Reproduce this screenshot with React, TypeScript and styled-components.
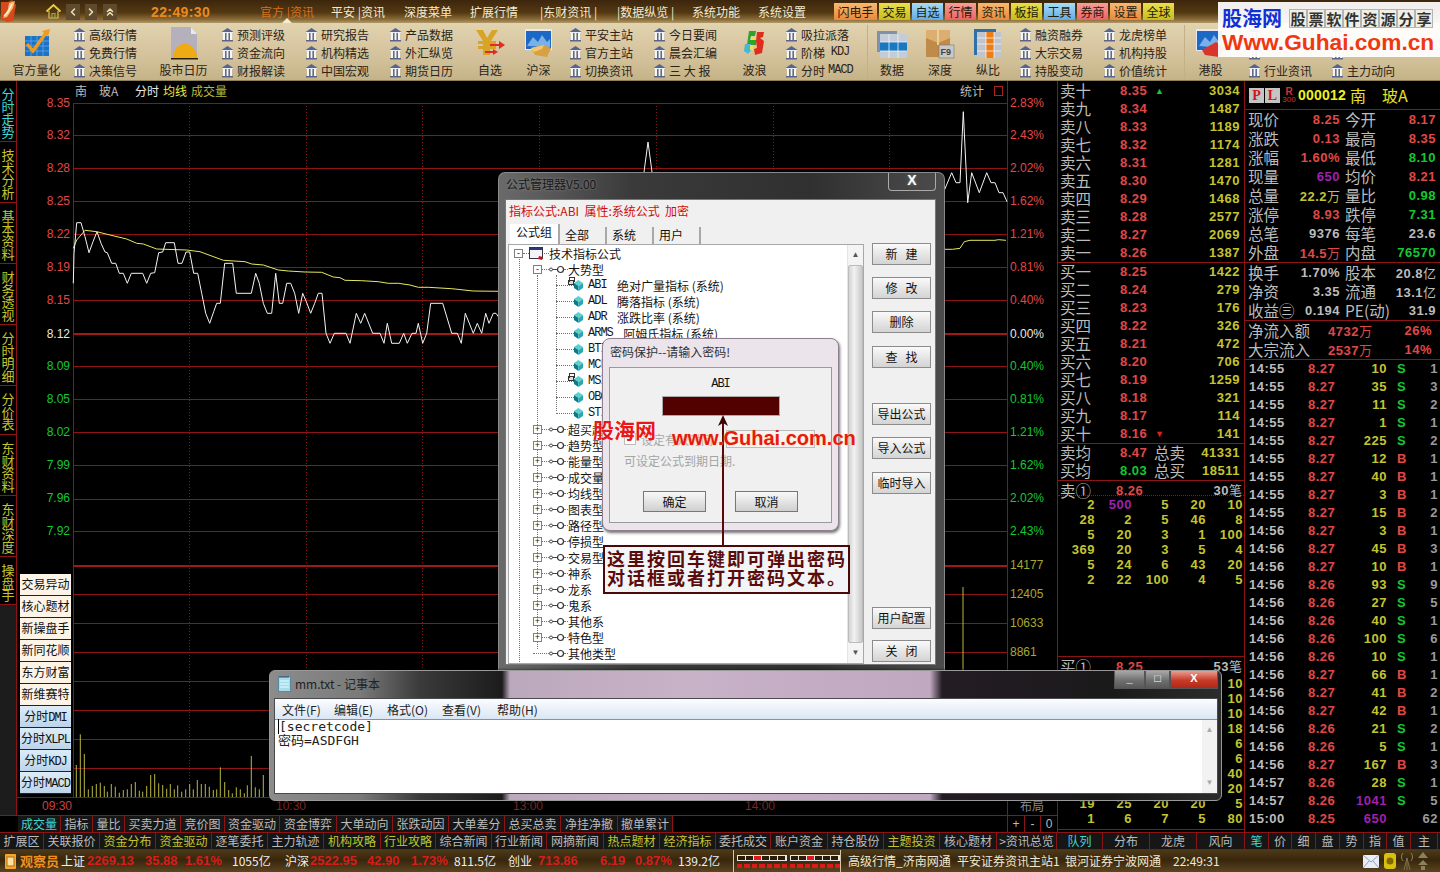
import React from 'react';
import styled, { createGlobalStyle } from 'styled-components';
import { ChevronLeft, ChevronRight, ChevronsUp } from 'lucide-react';

const CJK = '"Noto Sans CJK SC", "Liberation Sans", sans-serif';
const NUM = '"Liberation Sans", "Noto Sans CJK SC", sans-serif';
const C = {
  red: '#e04848',
  yellow: '#c4c430',
  green: '#14c832',
  gray: '#bcbcbc',
  purple: '#a020b0',
  line: '#8c1414',
  cyan: '#40d4d4',
  white: '#e8e8e8',
};

const Global = createGlobalStyle`
  html, body { margin: 0; padding: 0; background: #000; }
  body { font-family: ${CJK}; overflow: hidden; }
  * { box-sizing: border-box; }
`;

const Page = styled.div`
  position: relative;
  width: 1440px;
  height: 872px;
  overflow: hidden;
  background: #000;
  display: flex;
  flex-direction: column;
`;

/* ---------- top bar ---------- */
const TopBar = styled.div`
  height: 23px;
  flex: none;
  display: flex;
  align-items: center;
  background: linear-gradient(#3c260c, #543812 55%, #8a6c38 85%, #b09a68);
  position: relative;
`;
const LogoBox = styled.div`
  width: 46px;
  height: 23px;
  flex: none;
`;
const NavIcon = styled.div<{ $w: number; $dark?: boolean }>`
  width: ${p => p.$w}px;
  height: 16px;
  flex: none;
  display: flex;
  align-items: center;
  justify-content: center;
  color: #f0e0b0;
  background: ${p => (p.$dark ? '#5e4a2c' : 'transparent')};
`;
const NavGap = styled.div<{ $w: number }>`
  width: ${p => p.$w}px;
  flex: none;
`;
const Clock = styled.div`
  width: 109px;
  flex: none;
  font: bold 14px ${NUM};
  letter-spacing: 0.4px;
  color: #ea8a1c;
`;
const MenuItem = styled.div<{ $w: number; $active?: boolean }>`
  width: ${p => p.$w}px;
  flex: none;
  font-size: 12px;
  line-height: 16px;
  white-space: pre;
  color: ${p => (p.$active ? '#d8701c' : '#f2ead4')};
`;
const ActiveMark = styled.div`
  position: absolute;
  left: 282px;
  bottom: 0;
  width: 0;
  height: 0;
  border-left: 5px solid transparent;
  border-right: 5px solid transparent;
  border-bottom: 5px solid #f4ecd0;
`;
const HotGroup = styled.div`
  display: flex;
  gap: 2px;
`;
const tones: Record<string, string> = {
  o: 'linear-gradient(#f8b870, #e8893c)',
  y: 'linear-gradient(#e8e04c, #c6bc1c)',
  b: 'linear-gradient(#a6dcf4, #62ace4)',
  p: 'linear-gradient(#fa9c98, #e86464)',
};
const HotBtn = styled.div<{ $t: string; $w: number }>`
  width: ${p => p.$w}px;
  height: 17px;
  background: ${p => tones[p.$t]};
  color: #241a08;
  font-size: 12px;
  line-height: 17px;
  text-align: center;
`;

/* ---------- ribbon ---------- */
const Ribbon = styled.div`
  height: 58px;
  flex: none;
  display: flex;
  padding-top: 2px;
  background: linear-gradient(#e2d3b0, #d0be96 70%, #c4b288);
  border-bottom: 1px solid #8f8058;
`;
const BigCell = styled.div<{ $w: number; $sep?: boolean }>`
  width: ${p => p.$w}px;
  flex: none;
  display: flex;
  flex-direction: column;
  align-items: center;
  color: #2c2418;
  font-size: 12px;
  line-height: 18px;
  border-left: ${p => (p.$sep ? '1px solid #c2b088' : '0')};
`;
const BigIcon = styled.div`
  height: 36px;
  display: flex;
  align-items: center;
  justify-content: center;
`;
const SmallCol = styled.div<{ $w: number; $ml?: number }>`
  width: ${p => p.$w}px;
  margin-left: ${p => p.$ml ?? 0}px;
  flex: none;
  display: flex;
  flex-direction: column;
`;
const SmallRow = styled.div`
  height: 18px;
  display: flex;
  align-items: center;
  gap: 3px;
  font-size: 12px;
  color: #2c2418;
  white-space: pre;
`;
const MacroText = styled.span`
  font: 12px "Liberation Mono", monospace;
  letter-spacing: -1px;
`;

/* ---------- main ---------- */
const Main = styled.div`
  height: 751px;
  flex: none;
  display: grid;
  grid-template-columns: 1057px 188px 195px;
`;
const ChartCol = styled.div`
  display: flex;
  flex-direction: column;
  min-width: 0;
`;
const ChartArea = styled.div`
  position: relative;
  height: 734px;
  display: flex;
`;
const Rail = styled.div`
  width: 17px;
  flex: none;
  display: flex;
  flex-direction: column;
  background: #1c1c1c;
  border-right: 1px solid ${C.line};
`;
const RailTab = styled.div<{ $active?: boolean }>`
  writing-mode: vertical-rl;
  text-orientation: upright;
  font-size: 13px;
  letter-spacing: -0.5px;
  line-height: 15px;
  padding: 7px 0 3px;
  width: 16px;
  background: #000;
  color: ${p => (p.$active ? C.cyan : C.yellow)};
  border-bottom: 1px solid ${C.line};
  display: flex;
  align-items: center;
`;
const ChartSvg = styled.svg`
  display: block;
  width: 1040px;
  height: 734px;
  flex: none;
`;
const Ax = styled.text<{ $c: string }>`
  font: 12px ${NUM};
  fill: ${p => p.$c};
`;
const HeadText = styled.text<{ $c: string }>`
  font: 12px ${CJK};
  fill: ${p => p.$c};
`;
const FloatPanel = styled.div`
  position: absolute;
  left: 20px;
  top: 493px;
  width: 51px;
  display: flex;
  flex-direction: column;
`;
const FloatBtn = styled.div<{ $blue?: boolean }>`
  height: 22px;
  background: ${p => (p.$blue ? 'linear-gradient(#dcecf8, #bcd4ea)' : '#fdf3e6')};
  border-bottom: 1px solid #222;
  color: #101010;
  font-size: 12px;
  line-height: 19px;
  text-align: center;
  white-space: nowrap;
`;
const MonoLatin = styled.span`
  font: 12px "Liberation Mono", monospace;
  letter-spacing: -1px;
`;
const TabRow = styled.div`
  height: 17px;
  display: flex;
  padding-left: 18px;
  border-top: 1px solid ${C.line};
  background: #000;
`;
const TabCell = styled.div<{ $w: number; $c?: string }>`
  width: ${p => p.$w}px;
  flex: none;
  text-align: center;
  font-size: 12px;
  line-height: 16px;
  color: ${p => p.$c ?? C.gray};
  background: #161616;
  border-right: 1px solid ${C.line};
  white-space: nowrap;
`;
const TabSpacer = styled.div`
  flex: 1;
`;
const PlusCell = styled.div`
  width: 16.6px;
  flex: none;
  text-align: center;
  font: 12px/16px ${NUM};
  color: ${C.gray};
  border-left: 1px solid ${C.line};
`;

/* ---------- order book panel ---------- */
const BookPanel = styled.div`
  border-left: 1px solid ${C.line};
  border-right: 1px solid ${C.line};
  display: flex;
  flex-direction: column;
  padding-top: 1px;
  overflow: hidden;
`;
const BookBlock = styled.div`
  border-bottom: 1px solid ${C.line};
`;
const BookRow = styled.div`
  height: 18px;
  display: grid;
  grid-template-columns: 60px 33px 10px 1fr;
  align-items: center;
  padding: 0 4px 0 2px;
`;
const Cn16 = styled.span`
  font-size: 15.5px;
  line-height: 16px;
  padding-bottom: 2px;
  color: ${C.gray};
  white-space: nowrap;
`;
const Num = styled.span<{ $c?: string; $right?: boolean }>`
  font: bold 13px/18px ${NUM};
  letter-spacing: 0.5px;
  color: ${p => p.$c ?? C.yellow};
  text-align: ${p => (p.$right ? 'right' : 'left')};
  white-space: nowrap;
`;
const UpMark = styled.span<{ $c: string }>`
  font: bold 9px/9px ${NUM};
  color: ${p => p.$c};
  padding-left: 2px;
`;
const SumRow = styled.div`
  height: 18px;
  display: grid;
  grid-template-columns: 60px 34px 36px 1fr;
  align-items: center;
  padding: 0 4px 0 2px;
`;
const OneRow = styled.div<{ $dotted?: boolean }>`
  height: 15px;
  display: grid;
  grid-template-columns: 56px 40px 1fr;
  align-items: center;
  padding: 0 2px;
  border-bottom: ${p => (p.$dotted ? `1px dotted ${C.line}` : '0')};
`;
const TicksBlock = styled.div<{ $h: number; $pt?: number }>`
  height: ${p => p.$h}px;
  padding-top: ${p => p.$pt ?? 0}px;
  flex: none;
  border-bottom: 1px solid ${C.line};
  overflow: hidden;
`;
const TickRow = styled.div`
  display: grid;
  grid-template-columns: repeat(5, 37px);
  height: 15px;
  align-items: center;
`;

/* ---------- quote panel ---------- */
const QuotePanel = styled.div`
  display: flex;
  flex-direction: column;
  overflow: hidden;
`;
const QuoteHead = styled.div`
  height: 29px;
  flex: none;
  display: flex;
  align-items: center;
  padding-left: 4px;
  border-bottom: 1px solid ${C.line};
`;
const PLBox = styled.div`
  width: 15px;
  height: 15px;
  background: #c4c4c4;
  color: #d01818;
  font: bold 14px/15px "Liberation Serif", serif;
  text-align: center;
  margin-right: 1px;
`;
const RBadge = styled.div`
  width: 16px;
  display: flex;
  flex-direction: column;
  align-items: center;
  font: 8px/8px ${NUM};
  color: #d83030;
  margin-right: 1px;
`;
const RLetter = styled.span`
  font: bold 10px/9px ${NUM};
`;
const Code = styled.span`
  font: bold 14px ${NUM};
  color: #f0f020;
  letter-spacing: 0.2px;
  margin-right: 4px;
`;
const StockName = styled.span`
  font-size: 16px;
  color: #e8e020;
  white-space: pre;
`;
const QuoteBlock = styled.div`
  flex: none;
  border-bottom: 1px solid ${C.line};
`;
const QuoteRow = styled.div`
  height: 19px;
  display: grid;
  grid-template-columns: 35px 57px 5px 40px 51px;
  align-items: center;
  padding-left: 3px;
`;
const QuoteVal = styled.span<{ $c: string }>`
  font: bold 13px/17px ${NUM};
  letter-spacing: 0.5px;
  color: ${p => p.$c};
  text-align: right;
  white-space: nowrap;
`;
const UnitCn = styled.span`
  font-weight: normal;
  font-family: ${CJK};
  font-size: 13px;
  letter-spacing: 0;
`;
const FlowRow = styled.div`
  height: 19px;
  display: grid;
  grid-template-columns: 64px 60px 60px;
  align-items: center;
  padding-left: 3px;
`;
const Deal = styled.div`
  height: 18px;
  display: grid;
  grid-template-columns: 59px 38px 41px 20px 1fr;
  align-items: center;
  padding-left: 4px;
  padding-right: 2px;
`;
const DealList = styled.div``;
const BS = styled.span<{ $c: string }>`
  font: bold 13px/18px ${NUM};
  color: ${p => p.$c};
  text-align: left;
  padding-left: 10px;
`;

/* ---------- bottom rows ---------- */
const Row2 = styled.div`
  height: 18px;
  flex: none;
  display: flex;
  background: #161616;
  border-top: 1px solid ${C.line};
  border-bottom: 1px solid ${C.line};
`;
const Status = styled.div`
  height: 22px;
  flex: none;
  display: flex;
  align-items: center;
  background: linear-gradient(#4e3a18, #38260c 45%, #5a4520);
  overflow: hidden;
`;
const StatItem = styled.div<{ $w: number; $c: string; $bold?: boolean; $s?: number }>`
  width: ${p => p.$w}px;
  flex: none;
  color: ${p => p.$c};
  font: ${p => (p.$bold ? 'bold' : 'normal')} ${p => p.$s ?? 13}px/18px ${CJK};
  white-space: pre;
`;
const StatNum = styled(StatItem)`
  font-family: ${NUM};
`;
const StatusIcon = styled.div`
  width: 20px;
  display: flex;
  justify-content: center;
  flex: none;
`;
const SegBoxOuter = styled.div`
  display: flex;
  gap: 3px;
  padding-left: 3px;
  margin-right: 7px;
  border-left: 1px solid #d0c8a8;
  border-right: 1px solid #d0c8a8;
  height: 22px;
  align-items: center;
  flex: none;
`;
const SegGroup = styled.div`
  width: 50px;
  display: flex;
  flex-direction: column;
  gap: 3px;
`;
const SegTop = styled.div`
  display: flex;
  height: 6px;
  border: 1px solid #e8e8e8;
`;
const SegCell = styled.div<{ $on?: string }>`
  flex: 1;
  background: ${p => p.$on ?? '#2a1c08'};
  border-right: 1px solid #e8e8e8;
`;
const SegDots = styled.div`
  display: flex;
  gap: 2px;
`;
const SegDot = styled.div`
  flex: 1;
  height: 4px;
  background: #e01818;
`;
const StatusRight = styled.div`
  margin-left: auto;
  display: flex;
  align-items: center;
  gap: 5px;
  padding-right: 12px;
`;

/* ---------- Guhai overlays ---------- */
const Stamp = styled.div`
  position: absolute;
  top: 2px;
  left: 1218px;
  width: 222px;
  height: 55px;
  background: rgba(255, 255, 255, 0.93);
  padding: 3px 0 0 4px;
`;
const StampTop = styled.div`
  display: flex;
  align-items: center;
  height: 26px;
`;
const StampBlue = styled.div`
  width: 67px;
  font: bold 20px/24px ${CJK};
  color: #1030d8;
`;
const StampCell = styled.div`
  width: 18px;
  height: 19px;
  font: bold 15px/18px ${CJK};
  text-align: center;
  color: #333;
  background: #efefe6;
  border: 1px solid #b4b4b4;
`;
const StampRed = styled.div`
  font: bold 22.7px/23px ${NUM};
  color: #f03810;
  white-space: nowrap;
`;
const MarkCn = styled.div`
  position: absolute;
  left: 593px;
  top: 414px;
  font: bold 21px/30px ${CJK};
  color: #e81818;
  text-shadow: 0 0 2px #fff;
  white-space: nowrap;
`;
const MarkEn = styled.div`
  position: absolute;
  left: 672px;
  top: 426px;
  font: bold 20px/24px ${NUM};
  color: #e81818;
  text-shadow: 0 0 2px #ffe890;
  white-space: nowrap;
`;

/* ---------- formula manager window ---------- */
const Manager = styled.div`
  position: absolute;
  left: 498px;
  top: 172px;
  width: 447px;
  height: 498px;
  border-radius: 7px 7px 0 0;
  border: 1px solid #8a8a8a;
  border-bottom: 0;
  background: linear-gradient(90deg, #6a6a6a, #3a3a3a 30%, #303030 70%, #4c4c4c);
  display: flex;
  flex-direction: column;
`;
const MgrTitle = styled.div`
  height: 26px;
  flex: none;
  display: flex;
  align-items: flex-start;
  padding-left: 7px;
  font-size: 12px;
  line-height: 22px;
  color: #181818;
  text-shadow: 0 0 3px #8a8a8a;
`;
const MgrClose = styled.div`
  margin-left: auto;
  margin-right: 8px;
  width: 48px;
  height: 18px;
  border: 1px solid #aaa;
  border-top: 0;
  border-radius: 0 0 4px 4px;
  color: #fff;
  font: bold 14px/15px ${NUM};
  text-align: center;
`;
const MgrPanel = styled.div`
  margin: 0 8px 5px 6px;
  flex: 1;
  background: #f0f0f0;
  border: 1px solid #777;
  display: flex;
  flex-direction: column;
  padding-left: 2px;
  min-height: 0;
`;
const RedLine = styled.div`
  height: 22px;
  flex: none;
  color: #d00c0c;
  font-size: 12px;
  line-height: 22px;
  padding-left: 1px;
  white-space: pre;
`;
const TabsLine = styled.div`
  height: 22px;
  flex: none;
  display: flex;
  align-items: flex-end;
  padding-left: 2px;
`;
const MgrTab = styled.div<{ $on?: boolean }>`
  width: ${p => (p.$on ? 50 : 47)}px;
  height: ${p => (p.$on ? 20 : 17)}px;
  font-size: 12px;
  line-height: 15px;
  padding-left: ${p => (p.$on ? 6 : 5)}px;
  color: #111;
  border-right: 2px solid #a8a8a8;
  background: ${p => (p.$on ? '#fff' : '#f0f0f0')};
`;
const MgrBody = styled.div`
  flex: 1;
  display: flex;
  min-height: 0;
`;
const Tree = styled.div`
  position: relative;
  width: 356px;
  flex: none;
  background: #fff;
  border: 1px solid #a8a8a8;
  overflow: hidden;
`;
const TreeRow = styled.div<{ $lv: number }>`
  height: 16px;
  display: flex;
  align-items: center;
  padding-left: ${p => [5, 24, 47][p.$lv]}px;
  font-size: 12px;
  color: #151515;
  white-space: pre;
  position: relative;
`;
const Expander = styled.div`
  width: 9px;
  height: 9px;
  flex: none;
  border: 1px solid #808080;
  background: #fff;
  color: #222;
  font: 9px/7px ${NUM};
  text-align: center;
  position: relative;
`;
const Dash = styled.div<{ $w: number }>`
  width: ${p => p.$w}px;
  flex: none;
  border-top: 1px dotted #707070;
`;
const Code2 = styled.span`
  min-width: 24px;
  flex: none;
  font: 12px "Liberation Mono", monospace;
  margin-left: 5px;
  margin-right: 5px;
  letter-spacing: -1px;
`;
const Guide = styled.div<{ $x: number; $t: number; $h: number }>`
  position: absolute;
  left: ${p => p.$x}px;
  top: ${p => p.$t}px;
  height: ${p => p.$h}px;
  border-left: 1px dotted #707070;
`;
const Scroll = styled.div`
  position: absolute;
  right: 0;
  top: 0;
  bottom: 0;
  width: 16px;
  background: #f4f4f4;
  border-left: 1px solid #e4e4e4;
  display: flex;
  flex-direction: column;
  align-items: center;
`;
const ScrollArrow = styled.div`
  height: 20px;
  color: #555;
  font: 8px/20px ${NUM};
  flex: none;
`;
const ScrollThumb = styled.div`
  flex: 1;
  width: 15px;
  background: linear-gradient(90deg, #d4d4d4, #f2f2f2 40%, #c8c8c8);
  border: 1px solid #bbb;
  border-radius: 2px;
`;
const SideBtns = styled.div`
  flex: 1;
  display: flex;
  flex-direction: column;
  padding: 0 0 2px 8px;
`;
const WinBtn = styled.div<{ $mt?: number; $auto?: boolean }>`
  width: 59px;
  height: 22px;
  margin-top: ${p => (p.$auto ? 'auto' : `${p.$mt ?? 12}px`)};
  border: 1px solid #8c8c8c;
  background: linear-gradient(#fafafa, #e6e6e6 50%, #d4d4d4);
  font-size: 12px;
  line-height: 20px;
  text-align: center;
  color: #111;
  white-space: pre;
  flex: none;
`;

/* ---------- password dialog ---------- */
const PwdWin = styled.div`
  position: absolute;
  left: 602px;
  top: 338px;
  width: 237px;
  height: 193px;
  border-radius: 8px;
  border: 1px solid #8e8090;
  background: #ebe4eb;
  box-shadow: 1px 2px 3px rgba(0, 0, 0, 0.55);
  display: flex;
  flex-direction: column;
  padding: 0 6px 7px 6px;
`;
const PwdTitle = styled.div`
  height: 28px;
  flex: none;
  font-size: 12px;
  line-height: 26px;
  padding-left: 1px;
  color: #333;
`;
const PwdClient = styled.div`
  flex: 1;
  background: #f0f0f0;
  border: 1px solid #9a9a9a;
  display: flex;
  flex-direction: column;
  align-items: stretch;
`;
const PwdCode = styled.div`
  font: 12px/16px "Liberation Mono", monospace;
  letter-spacing: -1px;
  margin-top: 8px;
  text-align: center;
  color: #111;
`;
const PwdInput = styled.div`
  width: 118px;
  height: 20px;
  margin: 4px 0 0 52px;
  background: #520000;
  border: 1px solid #aaa;
`;
const CheckLine = styled.div`
  margin-top: 14px;
  height: 18px;
  padding: 0 16px 0 14px;
  display: flex;
  align-items: center;
  gap: 5px;
  font-size: 12px;
  color: #aaa;
`;
const CheckBox = styled.div`
  width: 12px;
  height: 12px;
  background: #fff;
  border: 1px solid #bbb;
  flex: none;
`;
const DateBox = styled.div`
  margin-left: auto;
  width: 89px;
  height: 18px;
  border: 1px solid #bbb;
  background: #f4f4f4;
`;
const HintLine = styled.div`
  margin-top: 5px;
  padding-left: 14px;
  font-size: 12px;
  line-height: 16px;
  color: #a4a4a4;
`;
const PwdBtns = styled.div`
  margin-top: auto;
  display: flex;
  gap: 29px;
  padding: 0 0 10px 33px;
`;
const PwdBtn = styled.div`
  width: 63px;
  height: 21px;
  border: 1px solid #777;
  background: linear-gradient(#f8f8f8, #e4e4e4 50%, #cfcfcf);
  font-size: 12px;
  line-height: 19px;
  text-align: center;
  color: #111;
`;
const ArrowSvg = styled.svg`
  position: absolute;
  left: 714px;
  top: 414px;
  width: 18px;
  height: 132px;
`;
const NoteBox = styled.div`
  position: absolute;
  left: 603px;
  top: 545px;
  width: 247px;
  height: 49px;
  background: #f2f4f6;
  border: 2px solid #4a0808;
  color: #5a0c0c;
  font: bold 18px/19px ${CJK};
  letter-spacing: 2px;
  padding: 2px 0 0 2px;
  white-space: nowrap;
`;

/* ---------- notepad ---------- */
const NotePad = styled.div`
  position: absolute;
  left: 269px;
  top: 670px;
  width: 953px;
  height: 131px;
  border: 1px solid #999;
  border-radius: 6px;
  background: linear-gradient(
    90deg,
    #8c8c8c 0,
    #7a7a7a 90px,
    #3a3a3a 150px,
    #1c1c1c 232px,
    #bca8bc 240px,
    #c8b2c8 420px,
    #c0a8c0 660px,
    #241c24 672px,
    #1a1a1a 840px,
    #2c2c2c 100%
  );
  display: flex;
  flex-direction: column;
  box-shadow: 0 0 3px rgba(0, 0, 0, 0.7);
`;
const NoteTitle = styled.div`
  height: 27px;
  flex: none;
  display: flex;
  align-items: flex-start;
  padding: 4px 3px 0 8px;
  gap: 4px;
  font-size: 12px;
  line-height: 17px;
  color: #222;
`;
const CaptionBtns = styled.div`
  margin-left: auto;
  margin-top: -4px;
  display: flex;
  height: 18px;
`;
const Caption = styled.div<{ $w: number; $red?: boolean }>`
  width: ${p => p.$w}px;
  height: 18px;
  border: 1px solid #555;
  border-top: 0;
  background: ${p =>
    p.$red ? 'linear-gradient(#e8a090, #c83a28 55%, #b02818)' : 'linear-gradient(#a8a8a8, #707070 55%, #585858)'};
  color: #fff;
  font: bold 11px/15px ${NUM};
  text-align: center;
`;
const NoteClient = styled.div`
  flex: 1;
  margin: 0 3px 6px 4px;
  border: 1px solid #4a4a4a;
  display: flex;
  flex-direction: column;
  min-height: 0;
  background: #fff;
`;
const NoteMenu = styled.div`
  height: 21px;
  flex: none;
  display: flex;
  align-items: center;
  padding-left: 7px;
  background: linear-gradient(#fbfcfe, #dbe6f4);
  border-bottom: 1px solid #7a96b4;
  font-size: 12px;
  color: #222;
`;
const NoteMenuItem = styled.div<{ $w: number }>`
  width: ${p => p.$w}px;
  flex: none;
`;
const NoteText = styled.div`
  flex: 1;
  display: flex;
  min-height: 0;
`;
const NotePre = styled.pre`
  flex: 1;
  margin: 0;
  padding: 0 0 0 3px;
  font: 13px/13.5px "DejaVu Sans Mono", "Noto Sans CJK SC", monospace;
  color: #222;
`;
const Caret = styled.span`
  border-left: 1px solid #000;
`;
const NoteScroll = styled.div`
  width: 15px;
  flex: none;
  background: #f2f2f2;
  color: #aaa;
  font: 8px/20px ${NUM};
  text-align: center;
  display: flex;
  flex-direction: column;
  justify-content: space-between;
`;

/* ---------- small drawings ---------- */
const Bank = () => (
  <svg width="13" height="15" viewBox="0 0 13 15">
    <path d="M6.500 1 12.500 5H.5z" fill="#59648a" />
    <path d="M1 5h11v1H1z" fill="#e8ecf4" />
    <path d="M2 6h2v7H2zM5.500 6h2v7h-2zM9 6h2v7H9z" fill="#f4f6fa" />
    <path d="M4 6h1.500v7H4zM7.500 6H9v7H7.500z" fill="#5f6a8e" />
    <path d="M1 13h11v1.500H1z" fill="#59648a" />
  </svg>
);
const Logo = () => (
  <svg width="20" height="22" viewBox="0 0 20 22">
    <path d="M1 2h7l4-2 4 5-3 16-6 1-6-3z" fill="#d8481c" />
    <path d="M9 3 15 1 13 8 7 17 3 18 8 9z" fill="#f6c070" />
    <path d="M12 4 8 12 4 16" stroke="#fff" strokeWidth="1.200" fill="none" />
  </svg>
);
const House = () => (
  <svg width="15" height="15" viewBox="0 0 15 15">
    <path d="M.5 7.500 7.500 1l7 6.500" stroke="#e8d048" strokeWidth="1.800" fill="none" />
    <path d="M3 7v7h9V7" stroke="#d8c050" strokeWidth="1.200" fill="none" />
    <path d="M6 14V9.500h3V14" stroke="#8ab040" strokeWidth="1.200" fill="none" />
  </svg>
);
const IconQuant = () => (
  <svg width="30" height="30" viewBox="0 0 30 30">
    <rect x="3" y="8" width="24" height="20" fill="#1c72c4" />
    <path d="M3 13h24M3 18h24M3 23h24M9 8v20M15 8v20M21 8v20" stroke="#62a8e8" strokeWidth=".8" />
    <path d="M5 16 11 23 24 5" stroke="#f09a20" strokeWidth="3.400" fill="none" />
    <path d="M20 3 28 1 26 9z" fill="#f09a20" />
  </svg>
);
const IconCalendar = () => (
  <svg width="32" height="34" viewBox="0 0 32 34">
    <path d="M3 1h20l6 7v25H3z" fill="#b4b0bc" />
    <path d="M23 1l6 7h-6z" fill="#e8e8ee" />
    <path d="M5 32a11 13 0 0 1 24 0z" fill="#f0aa14" />
    <path d="M3 32h27v1.500H3z" fill="#2a2000" />
  </svg>
);
const IconYen = () => (
  <svg width="30" height="28" viewBox="0 0 30 28">
    <path d="M1 1h7l4 8 5-8h6l-7 11h5v3h-6v2h6v3h-6v6h-7v-6H3v-3h5v-2H3v-3h5z" fill="#d8a428" />
    <path d="M15 15h9v-3l6 4-6 4v-3h-9z" fill="#e02c1c" />
    <path d="M10 22h8v-2l5 3-5 3v-2h-8z" fill="#e02c1c" />
  </svg>
);
const IconShSz = () => (
  <svg width="30" height="30" viewBox="0 0 30 30">
    <rect x="1" y="1" width="27" height="21" fill="#e8e8f0" />
    <rect x="2" y="3" width="25" height="18" fill="#1c68c4" />
    <path d="M3 18 9 9l5 5 4-7 5 7 3-3v8z" fill="#7ab0e8" />
    <path d="M7 20 20 17 27 20 23 29 11 27z" fill="#d8a040" />
    <path d="M7 20 20 17 18 21 10 24z" fill="#f0c870" />
  </svg>
);
const IconWave = () => (
  <svg width="26" height="26" viewBox="0 0 26 26">
    <path d="M7 1h7l-1 5H9l-1 4 6 0v5H5z" fill="#30a030" />
    <path d="M15 2h7l-1 5-3 1 4 3-2 12-7 2-1-6 3-1-1-7z" fill="#e02c1c" />
    <path d="M3 14h6l1 5-4 5-4-3z" fill="#48b8d0" />
    <path d="M9 7h4v3H9zM8 15h3v5H8z" fill="#f0e040" />
  </svg>
);
const IconData = () => (
  <svg width="32" height="30" viewBox="0 0 32 30">
    <path d="M1 3h20v3H4v18H1z" fill="#8090a8" />
    <rect x="4" y="6" width="27" height="24" fill="#c4ccd8" />
    <rect x="4" y="14" width="27" height="9" fill="#1878c0" />
    <path d="M4 14h27M4 23h27M13 6v24M22 6v24" stroke="#f0f4fa" strokeWidth=".8" />
  </svg>
);
const IconDepth = () => (
  <svg width="30" height="32" viewBox="0 0 30 32">
    <path d="M1 3h24v27H1z" fill="#c08a48" />
    <path d="M1 3h24v8L13 16 1 11z" fill="#dcae70" />
    <path d="M13 0v18" stroke="#e8d098" strokeWidth="2" />
    <rect x="14" y="18" width="15" height="13" fill="#c8c8c8" stroke="#777" strokeWidth=".6" />
    <text x="15.500" y="28" fontSize="9" fontWeight="700" fill="#444" fontFamily="Liberation Sans">F9</text>
  </svg>
);
const IconRatio = () => (
  <svg width="30" height="32" viewBox="0 0 30 32">
    <path d="M1 2h22v3H4v23H1z" fill="#3070a8" />
    <rect x="4" y="5" width="24" height="26" fill="#c0c4cc" />
    <rect x="13" y="5" width="8" height="26" fill="#f07c14" />
    <path d="M4 11h24M4 17h24M4 24h24M13 5v26M21 5v26" stroke="#f2f2f2" strokeWidth=".8" />
  </svg>
);
const IconHk = () => (
  <svg width="30" height="28" viewBox="0 0 30 28">
    <rect x="0" y="0" width="27" height="22" fill="#e8e8f0" />
    <rect x="1" y="2" width="25" height="19" fill="#1c68c4" />
    <path d="M3 17 9 8l5 5 4-7 5 7 3-3v9z" fill="#7ab0e8" />
    <path d="M6 21 20 13 29 19 23 28 9 26z" fill="#d8342c" />
  </svg>
);
const KeyIcon = () => (
  <svg width="15" height="9" viewBox="0 0 15 9">
    <circle cx="2" cy="4.500" r="1.500" fill="none" stroke="#444" />
    <path d="M3.500 4.500H9" stroke="#444" />
    <circle cx="11.500" cy="4.500" r="3" fill="#fff" stroke="#333" strokeWidth="1.200" />
  </svg>
);
const Cube = () => (
  <svg width="9" height="11" viewBox="0 0 9 11">
    <path d="M4.500 0 9 3 4.500 6 0 3z" fill="#5cd0d0" />
    <path d="M0 3l4.500 3v5L0 8z" fill="#0a7a88" />
    <path d="M9 3 4.500 6v5L9 8z" fill="#28a8b0" />
  </svg>
);
const RootIcon = () => (
  <svg width="15" height="13" viewBox="0 0 15 13">
    <rect x=".5" y=".5" width="13" height="11" fill="#f4f4f8" stroke="#334" />
    <path d="M1 1h12v2H1z" fill="#28387c" />
    <path d="M10 9l4 1-1 3-4-1z" fill="#c01818" />
  </svg>
);
const LockIcon = styled.div`
  position: absolute;
  left: 59px;
  top: 3px;
  width: 6px;
  height: 5px;
  border: 1px solid #333;
  background: #ddd;
  &::before {
    content: '';
    position: absolute;
    left: 0;
    top: -4px;
    width: 4px;
    height: 4px;
    border: 1px solid #333;
    border-bottom: 0;
  }
`;
const Envelope = () => (
  <svg width="16" height="13" viewBox="0 0 16 13">
    <rect width="16" height="13" fill="#e8eef8" />
    <path d="M0 0 8 7l8-7M0 13l6-7M16 13l-6-7" stroke="#90a0b8" fill="none" />
  </svg>
);
const Coin = () => (
  <svg width="12" height="16" viewBox="0 0 12 16">
    <rect width="12" height="16" rx="3" fill="#d8c010" />
    <circle cx="6" cy="8" r="3.500" fill="#806800" />
  </svg>
);
const WatchIcon = () => (
  <svg width="11" height="15" viewBox="0 0 11 15">
    <rect width="11" height="15" rx="1" fill="#f0a830" />
    <rect x="2" y="3" width="7" height="9" fill="#fbe0a0" stroke="#b86a10" />
  </svg>
);
const Antenna = () => (
  <svg width="12" height="20" viewBox="0 0 12 20">
    <path d="M6 7v12M3 19l3-12 3 12" stroke="#7c7450" fill="none" />
    <path d="M2 2a6 6 0 0 0 0 8M10 2a6 6 0 0 1 0 8" stroke="#8a8258" fill="none" />
  </svg>
);
const UpDown = () => (
  <svg width="10" height="18" viewBox="0 0 10 18">
    <path d="M5 0 10 6H0zM5 8l5 5H0zM3 14h4v4H3z" fill="#8a8258" />
  </svg>
);
const NoteIcon = () => (
  <svg width="13" height="17" viewBox="0 0 13 17">
    <rect x=".5" y="1.500" width="12" height="15" fill="#a8dcec" stroke="#5a8aa0" />
    <path d="M2 1v2M4 1v2M6 1v2M8 1v2M10 1v2" stroke="#446" />
    <path d="M2 6h9M2 9h9M2 12h9" stroke="#dff" />
  </svg>
);

/* ---------- data ---------- */
const big = (w: number, label: string, icon: React.ReactNode, sep?: boolean) => ({ kind: 'big' as const, w, label, icon, sep });
const col = (w: number, rows: React.ReactNode[], ml?: number) => ({ kind: 'col' as const, w, rows, ml });
const ribbon = [
  big(73, '官方量化', <IconQuant />),
  col(73, ['高级行情', '免费行情', '决策信号']),
  big(75, '股市日历', <IconCalendar />),
  col(84, ['预测评级', '资金流向', '财报解读']),
  col(84, ['研究报告', '机构精选', '中国宏观']),
  col(79, ['产品数据', '外汇纵览', '期货日历']),
  big(44, '自选', <IconYen />),
  big(53, '沪深', <IconShSz />),
  col(84, ['平安主站', '官方主站', '切换资讯'], 4),
  col(76, ['今日要闻', '晨会汇编', '三 大 报']),
  big(51, '波浪', <IconWave />),
  col(82, ['吸拉派落', <>阶梯 <MacroText>KDJ</MacroText></>, <>分时<MacroText>MACD</MacroText></>], 5),
  big(49, '数据', <IconData />, true),
  big(48, '深度', <IconDepth />),
  big(48, '纵比', <IconRatio />),
  col(84, ['融资融券', '大宗交易', '持股变动'], 7),
  col(81, ['龙虎榜单', '机构持股', '价值统计']),
  big(52, '港股', <IconHk />, true),
  col(83, ['\u00a0', '\u00a0', '行业资讯'], 12),
  col(100, ['\u00a0', '\u00a0', '主力动向']),
];
const menus: [string, number, boolean?][] = [
  ['官方 |资讯', 71, true],
  ['平安 |资讯', 73],
  ['深度菜单', 66],
  ['扩展行情', 70],
  ['|东财资讯 |', 77],
  ['|数据纵览 |', 75],
  ['系统功能', 66],
  ['系统设置', 76],
];
const hot: [string, string, number][] = [
  ['闪电手', 'o', 43],
  ['交易', 'y', 31],
  ['自选', 'b', 31],
  ['行情', 'p', 31],
  ['资讯', 'o', 31],
  ['板指', 'y', 31],
  ['工具', 'b', 31],
  ['券商', 'p', 31],
  ['设置', 'o', 31],
  ['全球', 'y', 31],
];
const railTabs = ['分时走势', '技术分析', '基本资料', '财务透视', '分时明细', '分价表', '东财资料', '东财深度', '操盘手'];

const hLines = [103, 135, 168, 201, 234, 267, 300, 366, 399, 432, 465, 499, 531, 594, 623, 652, 681, 710, 739, 768];
const vLines = [189, 306, 422, 539, 656, 773, 889];
const leftAxis: [string, number, string][] = [
  ['8.35', 103, C.red], ['8.32', 135, C.red], ['8.28', 168, C.red], ['8.25', 201, C.red],
  ['8.22', 234, C.red], ['8.19', 267, C.red], ['8.15', 300, C.red], ['8.12', 334, '#e8e8e8'],
  ['8.09', 366, C.green], ['8.05', 399, C.green], ['8.02', 432, C.green], ['7.99', 465, C.green],
  ['7.96', 498, C.green], ['7.92', 531, C.green],
];
const rightAxis: [string, number, string][] = [
  ['2.83%', 103, C.red], ['2.43%', 135, C.red], ['2.02%', 168, C.red], ['1.62%', 201, C.red],
  ['1.21%', 234, C.red], ['0.81%', 267, C.red], ['0.40%', 300, C.red], ['0.00%', 334, '#e8e8e8'],
  ['0.40%', 366, C.green], ['0.81%', 399, C.green], ['1.21%', 432, C.green], ['1.62%', 465, C.green],
  ['2.02%', 498, C.green], ['2.43%', 531, C.green],
  ['14177', 565, '#a8a830'], ['12405', 594, '#a8a830'], ['10633', 623, '#a8a830'], ['8861', 652, '#a8a830'],
];
const priceZoom = [220,610,222,520,230,428,243,428,255,470,267,518,279,485,291,455,303,490,315,516,322,518,335,550,347,550,358,580,370,580,382,610,394,580,428,580,440,610,452,580,464,578,476,518,488,516,497,488,523,488,534,550,546,550,558,516,569,516,581,580,593,580,605,640,617,700,629,730,641,695,650,670,661,670,674,550,698,550,709,640,754,640,767,580,778,610,790,670,802,700,815,700,827,580,838,670,848,670,860,610,872,610,884,640,896,700,908,640,919,665,932,700,944,670,955,640,966,640,978,760,990,790,1003,760,1038,760,1050,790,1069,700,1082,730,1094,700,1118,760,1140,760,1152,790,1162,730,1175,790,1198,790,1211,760,1222,790,1236,760,1248,760,1255,730,1268,790,1280,760,1292,670,1328,670,1355,760,1372,760,1384,790,1396,700,1420,760,1432,730,1445,760,1457,700,1467,730,1480,700,1488,700,1495,710];
const avgZoom = [220,505,230,480,255,451,290,455,330,465,380,477,410,490,430,492,470,507,560,510,600,515,670,541,735,545,755,552,790,555,835,570,865,573,915,576,965,577,1000,591,1020,593,1035,601,1085,602,1135,605,1165,610,1195,610,1230,615,1255,622,1285,622,1355,626,1420,633,1495,634];
const priceRight = [40,338,65,278,78,308,90,308,100,95,113,368,125,278,148,338,170,278,183,308,195,308,207,338,219,338,231,365];
const avgRight = [40,508,68,508,90,505,103,485,120,481,195,481,205,479,228,481];
const volZoom = [229,795,241,703,253,762,265,868,277,858,289,852,301,848,313,858,322,875,334,852,346,860,358,878,370,870,382,868,394,852,406,846,418,872,428,875,440,858,452,825,464,822,476,850,488,855,500,866,511,852,523,868,533,856,545,875,557,868,569,852,580,868,592,840,604,852,616,852,628,860,640,870,650,868,661,802,674,846,686,870,697,880,709,862,721,868,733,880,742,856,754,768,766,862,778,868,790,825];
const pts = (a: number[], ox: number, oy: number) => {
  const out: string[] = [];
  for (let i = 0; i < a.length; i += 2) out.push(`${(ox + a[i] / 3).toFixed(1)},${(oy + a[i + 1] / 3).toFixed(1)}`);
  return out.join(' ');
};
const volPath = () => {
  let d = '';
  for (let i = 0; i < volZoom.length; i += 2) d += `M${(volZoom[i] / 3).toFixed(1)} 797V${(500 + volZoom[i + 1] / 3).toFixed(1)}`;
  return d + 'M963 797V587';
};

const sell: [string, string, string][] = [
  ['卖十','8.35','3034'],['卖九','8.34','1487'],['卖八','8.33','1189'],['卖七','8.32','1174'],['卖六','8.31','1281'],
  ['卖五','8.30','1470'],['卖四','8.29','1468'],['卖三','8.28','2577'],['卖二','8.27','2069'],['卖一','8.26','1387'],
];
const buy: [string, string, string][] = [
  ['买一','8.25','1422'],['买二','8.24','279'],['买三','8.23','176'],['买四','8.22','326'],['买五','8.21','472'],
  ['买六','8.20','706'],['买七','8.19','1259'],['买八','8.18','321'],['买九','8.17','114'],['买十','8.16','141'],
];
const sellTicks = [
  ['2','500','5','20','10'],['28','2','5','46','8'],['5','20','3','1','100'],
  ['369','20','3','5','4'],['5','24','6','43','20'],['2','22','100','4','5'],
];
const buyTicks = [
  ['3','12','5','8','10'],['10','5','20','3','10'],['6','2','15','9','10'],['20','4','7','30','18'],
  ['8','16','2','5','6'],['12','3','9','10','6'],['5','10','6','2','40'],['30','8','4','20','20'],
  ['19','25','20','20','5'],['1','6','7','5','80'],
];
type Q = [string, React.ReactNode, string, string, React.ReactNode, string];
const Wan = ({ n }: { n: string }) => <>{n}<UnitCn>万</UnitCn></>;
const Yi = ({ n }: { n: string }) => <>{n}<UnitCn>亿</UnitCn></>;
const quotes: Q[] = [
  ['现价','8.25',C.red,'今开','8.17',C.red],
  ['涨跌','0.13',C.red,'最高','8.35',C.red],
  ['涨幅','1.60%',C.red,'最低','8.10',C.green],
  ['现量','650',C.purple,'均价','8.21',C.red],
  ['总量',<Wan n="22.2" />,C.yellow,'量比','0.98',C.green],
  ['涨停','8.93',C.red,'跌停','7.31',C.green],
  ['总笔','9376',C.gray,'每笔','23.6',C.gray],
  ['外盘',<Wan n="14.5" />,C.red,'内盘','76570',C.green],
];
const quotes2: Q[] = [
  ['换手','1.70%',C.gray,'股本',<Yi n="20.8" />,C.gray],
  ['净资','3.35',C.gray,'流通',<Yi n="13.1" />,C.gray],
  ['收益㊂','0.194',C.gray,'PE(动)','31.9',C.gray],
];
const deals: [string, string, string, string, string][] = [
  ['14:55','8.27','10','S','1'],['14:55','8.27','35','S','3'],['14:55','8.27','11','S','2'],['14:55','8.27','1','S','1'],
  ['14:55','8.27','225','S','2'],['14:55','8.27','12','B','1'],['14:55','8.27','40','B','1'],['14:55','8.27','3','B','1'],
  ['14:55','8.27','15','B','2'],['14:56','8.27','3','B','1'],['14:56','8.27','45','B','3'],['14:56','8.27','10','B','1'],
  ['14:56','8.26','93','S','9'],['14:56','8.26','27','S','5'],['14:56','8.26','40','S','1'],['14:56','8.26','100','S','6'],
  ['14:56','8.26','10','S','1'],['14:56','8.27','66','B','1'],['14:56','8.27','41','B','2'],['14:56','8.27','42','B','1'],
  ['14:56','8.26','21','S','2'],['14:56','8.26','5','S','1'],['14:56','8.27','167','B','3'],['14:57','8.26','28','S','1'],
  ['14:57','8.26','1041','S','5'],['15:00','8.25','650','','62'],
];
const tabs1: [string, number][] = [
  ['成交量',43],['指标',32],['量比',32],['买卖力道',56],['竞价图',44],['资金驱动',55],['资金博弈',57],
  ['大单动向',56],['张跌动因',56],['大单差分',56],['总买总卖',56],['净挂净撤',57],['撤单累计',55],
];
const tabs2: [string, number, boolean?][] = [
  ['扩展区',44],['关联报价',56],['资金分布',56,true],['资金驱动',56,true],['逐笔委托',56],['主力轨迹',56],
  ['机构攻略',57,true],['行业攻略',55,true],['综合新闻',56],['行业新闻',55],['网摘新闻',57],['热点题材',56,true],
  ['经济指标',56,true],['委托成交',55],['账户资金',57],['持仓股份',56],['主题投资',56,true],['核心题材',57],['>资讯总览',60],
];
const tabs3: [string, number, string?][] = [
  ['队列',46,C.cyan],['分布',47],['龙虎',47],['风向',48],
  ['笔',24,C.cyan],['价',23],['细',24],['盘',24],['势',24],['指',23],['值',24],['主',27],
];
const floatBtns: [React.ReactNode, boolean?][] = [
  ['交易异动'],['核心题材'],['新操盘手'],['新同花顺'],['东方财富'],['新维赛特'],
  [<>分时<MonoLatin>DMI</MonoLatin></>,true],[<>分时<MonoLatin>XLPL</MonoLatin></>,true],
  [<>分时<MonoLatin>KDJ</MonoLatin></>,true],[<>分时<MonoLatin>MACD</MonoLatin></>,true],
];
const treeGroups = ['超买超卖型','趋势型','能量型','成交量型','均线型','图表型','路径型','停损型','交易型','神系','龙系','鬼系','其他系','特色型'];
const formulas: [string, string, boolean?][] = [
  ['ABI','绝对广量指标 (系统)',true],['ADL','腾落指标 (系统)'],['ADR','涨跌比率 (系统)'],
  ['ARMS','  阿姆氏指标 (系统)'],['BTI','广量冲力 (系统)'],['MCL','麦氏指标 (系统)'],
  ['MSI','麦氏综合 (系统)',true],['OBOS','超买超卖 (系统)'],['STIX','指数平滑 (系统)'],
];
const stats: [string, number, string, boolean][] = [
  ['上证',26,'#f0f0f0',false],['2269.13',58,'#d81c1c',true],['35.88',40,'#d81c1c',true],['1.61%',47,'#d81c1c',true],
  ['1055亿',53,'#f0f0f0',false],['沪深',25,'#f0f0f0',false],['2522.95',57,'#d81c1c',true],['42.90',44,'#d81c1c',true],
  ['1.73%',43,'#d81c1c',true],['811.5亿',54,'#f0f0f0',false],['创业',30,'#f0f0f0',false],['713.86',62,'#d81c1c',true],
  ['6.19',35,'#d81c1c',true],['0.87%',43,'#d81c1c',true],['139.2亿',55,'#f0f0f0',false],
];
const SegBar = ({ on }: { on: number }) => (
  <SegGroup>
    <SegTop>
      {[0, 1, 2, 3, 4, 5].map(i => (
        <SegCell key={i} $on={i === on ? '#e01818' : undefined} />
      ))}
    </SegTop>
    <SegDots>
      {[0, 1, 2, 3, 4, 5, 6].map(i => (
        <SegDot key={i} />
      ))}
    </SegDots>
  </SegGroup>
);

export default function App() {
  return (
    <Page>
      <Global />
      <TopBar>
        <LogoBox><Logo /></LogoBox>
        <NavIcon $w={15}><House /></NavIcon>
        <NavGap $w={5} />
        <NavIcon $w={14} $dark><ChevronLeft size={12} strokeWidth={3} /></NavIcon>
        <NavGap $w={5} />
        <NavIcon $w={12} $dark><ChevronRight size={12} strokeWidth={3} /></NavIcon>
        <NavGap $w={6} />
        <NavIcon $w={14} $dark><ChevronsUp size={12} strokeWidth={3} /></NavIcon>
        <NavGap $w={34} />
        <Clock>22:49:30</Clock>
        {menus.map(([t, w, a]) => (
          <MenuItem key={t} $w={w} $active={a}>{t}</MenuItem>
        ))}
        <HotGroup>
          {hot.map(([t, c, w]) => (
            <HotBtn key={t} $t={c} $w={w}>{t}</HotBtn>
          ))}
        </HotGroup>
        <ActiveMark />
      </TopBar>

      <Ribbon>
        {ribbon.map((it, i) =>
          it.kind === 'big' ? (
            <BigCell key={i} $w={it.w} $sep={it.sep}>
              <BigIcon>{it.icon}</BigIcon>
              {it.label}
            </BigCell>
          ) : (
            <SmallCol key={i} $w={it.w} $ml={it.ml}>
              {it.rows.map((r, j) => (
                <SmallRow key={j}>
                  <Bank />
                  {r}
                </SmallRow>
              ))}
            </SmallCol>
          ),
        )}
      </Ribbon>

      <Main>
        <ChartCol>
          <ChartArea>
            <Rail>
              {railTabs.map((t, i) => (
                <RailTab key={t} $active={i === 0}>{t}</RailTab>
              ))}
            </Rail>
            <ChartSvg viewBox="17 81 1040 734">
              {hLines.map(y => (
                <line key={y} x1="73" x2="1007" y1={y + 0.5} y2={y + 0.5} stroke={C.line} />
              ))}
              <rect x="73" y="333" width="934" height="2" fill="#a01818" />
              <rect x="73" y="565" width="934" height="2" fill="#a01818" />
              {vLines.map(x => (
                <line key={x} x1={x + 0.5} x2={x + 0.5} y1="103" y2="797" stroke={C.line} strokeDasharray="1 2" />
              ))}
              <line x1="73.500" x2="73.500" y1="103" y2="797" stroke={C.line} />
              <line x1="1007.500" x2="1007.500" y1="81" y2="815" stroke={C.line} />
              <line x1="17" x2="1057" y1="797.500" y2="797.500" stroke={C.line} />
              {leftAxis.map(([t, y, c]) => (
                <Ax key={t} x="70" y={y + 4} textAnchor="end" $c={c}>{t}</Ax>
              ))}
              {rightAxis.map(([t, y, c], i) => (
                <Ax key={i} x="1010" y={y + 4} $c={c}>{t}</Ax>
              ))}
              <HeadText x="75" y="96" $c="#bcbcbc">南　玻A</HeadText>
              <HeadText x="135" y="96" $c="#e8e8e8">分时</HeadText>
              <HeadText x="163" y="96" $c="#e8e840">均线</HeadText>
              <HeadText x="191" y="96" $c="#b8b840">成交量</HeadText>
              <HeadText x="960" y="96" $c="#bcbcbc">统计</HeadText>
              <rect x="994.500" y="86.500" width="8" height="9" fill="none" stroke="#b02020" />
              <path d={volPath()} stroke="#b8b840" fill="none" />
              <polyline points={pts(avgZoom, 0, 80)} stroke="#e8e860" fill="none" />
              <polyline points={pts(avgRight, 930, 80)} stroke="#e8e860" fill="none" />
              <polyline points={pts(priceZoom, 0, 80)} stroke="#f4f4f4" fill="none" />
              <polyline points="498,315 560,280 644,172 648,142 652,172 700,260 800,300 900,260 943,192" stroke="#f4f4f4" fill="none" />
              <polyline points={pts(priceRight, 930, 80)} stroke="#f4f4f4" fill="none" />
              <Ax x="72" y="810" textAnchor="end" $c="#c84040">09:30</Ax>
              <Ax x="306" y="810" textAnchor="end" $c="#7a2828">10:30</Ax>
              <Ax x="543" y="810" textAnchor="end" $c="#7a2828">13:00</Ax>
              <Ax x="775" y="810" textAnchor="end" $c="#7a2828">14:00</Ax>
              <HeadText x="1020" y="811" $c="#8c8c8c">布局</HeadText>
            </ChartSvg>
            <FloatPanel>
              {floatBtns.map(([t, b], i) => (
                <FloatBtn key={i} $blue={b}>{t}</FloatBtn>
              ))}
            </FloatPanel>
          </ChartArea>
          <TabRow>
            {tabs1.map(([t, w], i) => (
              <TabCell key={t} $w={w} $c={i === 0 ? C.cyan : undefined}>{t}</TabCell>
            ))}
            <TabSpacer />
            <PlusCell>+</PlusCell>
            <PlusCell>-</PlusCell>
            <PlusCell>0</PlusCell>
          </TabRow>
        </ChartCol>

        <BookPanel>
          <BookBlock>
            {sell.map(([l, p, q], i) => (
              <BookRow key={l}>
                <Cn16>{l}</Cn16>
                <Num $c={C.red}>{p}</Num>
                <UpMark $c={C.green}>{i === 0 ? '▲' : ''}</UpMark>
                <Num $right>{q}</Num>
              </BookRow>
            ))}
          </BookBlock>
          <BookBlock>
            {buy.map(([l, p, q], i) => (
              <BookRow key={l}>
                <Cn16>{l}</Cn16>
                <Num $c={C.red}>{p}</Num>
                <UpMark $c="#e02020">{i === 9 ? '▼' : ''}</UpMark>
                <Num $right>{q}</Num>
              </BookRow>
            ))}
          </BookBlock>
          <BookBlock>
            <SumRow>
              <Cn16>卖均</Cn16>
              <Num $c={C.red}>8.47</Num>
              <Cn16>总卖</Cn16>
              <Num $right>41331</Num>
            </SumRow>
            <SumRow>
              <Cn16>买均</Cn16>
              <Num $c={C.green}>8.03</Num>
              <Cn16>总买</Cn16>
              <Num $right>18511</Num>
            </SumRow>
          </BookBlock>
          <OneRow $dotted>
            <Cn16>卖①</Cn16>
            <Num $c={C.red}>8.26</Num>
            <Num $c={C.gray} $right>30<UnitCn>笔</UnitCn></Num>
          </OneRow>
          <TicksBlock $h={161}>
            {sellTicks.map((r, i) => (
              <TickRow key={i}>
                {r.map((v, j) => (
                  <Num key={j} $right $c={v === '500' ? C.purple : undefined}>{v}</Num>
                ))}
              </TickRow>
            ))}
          </TicksBlock>
          <OneRow>
            <Cn16>买①</Cn16>
            <Num $c={C.red}>8.25</Num>
            <Num $c={C.gray} $right>53<UnitCn>笔</UnitCn></Num>
          </OneRow>
          <TicksBlock $h={158} $pt={3}>
            {buyTicks.map((r, i) => (
              <TickRow key={i}>
                {r.map((v, j) => (
                  <Num key={j} $right>{v}</Num>
                ))}
              </TickRow>
            ))}
          </TicksBlock>
        </BookPanel>

        <QuotePanel>
          <QuoteHead>
            <PLBox>P</PLBox>
            <PLBox>L</PLBox>
            <RBadge>
              <RLetter>R</RLetter>300
            </RBadge>
            <Code>000012</Code>
            <StockName>南　玻A</StockName>
          </QuoteHead>
          <QuoteBlock>
            {quotes.map(([a, b, c, d, e, f]) => (
              <QuoteRow key={a}>
                <Cn16>{a}</Cn16>
                <QuoteVal $c={c}>{b}</QuoteVal>
                <span />
                <Cn16>{d}</Cn16>
                <QuoteVal $c={f}>{e}</QuoteVal>
              </QuoteRow>
            ))}
          </QuoteBlock>
          <QuoteBlock>
            {quotes2.map(([a, b, c, d, e, f]) => (
              <QuoteRow key={a}>
                <Cn16>{a}</Cn16>
                <QuoteVal $c={c}>{b}</QuoteVal>
                <span />
                <Cn16>{d}</Cn16>
                <QuoteVal $c={f}>{e}</QuoteVal>
              </QuoteRow>
            ))}
          </QuoteBlock>
          <QuoteBlock>
            <FlowRow>
              <Cn16>净流入额</Cn16>
              <QuoteVal $c={C.red}><Wan n="4732" /></QuoteVal>
              <QuoteVal $c={C.red}>26%</QuoteVal>
            </FlowRow>
            <FlowRow>
              <Cn16>大宗流入</Cn16>
              <QuoteVal $c={C.red}><Wan n="2537" /></QuoteVal>
              <QuoteVal $c={C.red}>14%</QuoteVal>
            </FlowRow>
          </QuoteBlock>
          <DealList>
            {deals.map(([t, p, v, s, n], i) => (
              <Deal key={i}>
                <Num $c={C.gray}>{t}</Num>
                <Num $c={C.red}>{p}</Num>
                <Num $right $c={Number(v) >= 500 ? C.purple : undefined}>{v}</Num>
                <BS $c={s === 'S' ? C.green : C.red}>{s}</BS>
                <Num $right $c="#9a9a9a">{n}</Num>
              </Deal>
            ))}
          </DealList>
        </QuotePanel>
      </Main>

      <Row2>
        {tabs2.map(([t, w, y]) => (
          <TabCell key={t} $w={w} $c={y ? C.yellow : undefined}>{t}</TabCell>
        ))}
        {tabs3.map(([t, w, c]) => (
          <TabCell key={t} $w={w} $c={c}>{t}</TabCell>
        ))}
      </Row2>

      <Status>
        <StatusIcon><WatchIcon /></StatusIcon>
        <StatItem $w={41} $c="#f09020" $bold>观察员</StatItem>
        {stats.map(([t, w, c, b], i) =>
          b ? (
            <StatNum key={i} $w={w} $c={c} $bold>{t}</StatNum>
          ) : (
            <StatItem key={i} $w={w} $c={c} $s={12}>{t}</StatItem>
          ),
        )}
        <SegBoxOuter>
          <SegBar on={2} />
          <SegBar on={2} />
        </SegBoxOuter>
        <StatItem $w={109} $c="#f0e8d0" $s={12}>高级行情_济南网通</StatItem>
        <StatItem $w={108} $c="#f0e8d0" $s={12}>平安证券资讯主站1</StatItem>
        <StatItem $w={108} $c="#f0e8d0" $s={12}>银河证券宁波网通</StatItem>
        <StatItem $w={60} $c="#f0e8d0" $s={12}>22:49:31</StatItem>
        <StatusRight>
          <Envelope />
          <Coin />
          <Antenna />
          <UpDown />
        </StatusRight>
      </Status>

      <Stamp>
        <StampTop>
          <StampBlue>股海网</StampBlue>
          {'股票软件资源分享'.split('').map(c => (
            <StampCell key={c}>{c}</StampCell>
          ))}
        </StampTop>
        <StampRed>Www.Guhai.com.cn</StampRed>
      </Stamp>

      <Manager>
        <MgrTitle>
          公式管理器V5.00
          <MgrClose>X</MgrClose>
        </MgrTitle>
        <MgrPanel>
          <RedLine>指标公式:ABI  属性:系统公式  加密</RedLine>
          <TabsLine>
            <MgrTab $on>公式组</MgrTab>
            <MgrTab>全部</MgrTab>
            <MgrTab>系统</MgrTab>
            <MgrTab>用户</MgrTab>
          </TabsLine>
          <MgrBody>
            <Tree>
              <Guide $x={10} $t={14} $h={405} />
              <Guide $x={28} $t={30} $h={374} />
              <Guide $x={47} $t={30} $h={136} />
              <TreeRow $lv={0}>
                <Expander>-</Expander>
                <Dash $w={6} />
                <RootIcon />
                <Dash $w={5} />
                技术指标公式
              </TreeRow>
              <TreeRow $lv={1}>
                <Expander>-</Expander>
                <Dash $w={7} />
                <KeyIcon />
                <Dash $w={4} />
                大势型
              </TreeRow>
              {formulas.map(([c, d, lock]) => (
                <TreeRow key={c} $lv={2}>
                  {lock && <LockIcon />}
                  <Dash $w={18} />
                  <Cube />
                  <Code2>{c}</Code2>
                  {d}
                </TreeRow>
              ))}
              {treeGroups.map(g => (
                <TreeRow key={g} $lv={1}>
                  <Expander>+</Expander>
                  <Dash $w={7} />
                  <KeyIcon />
                  <Dash $w={4} />
                  {g}
                </TreeRow>
              ))}
              <TreeRow $lv={1}>
                <Dash $w={16} />
                <KeyIcon />
                <Dash $w={4} />
                其他类型
              </TreeRow>
              <TreeRow $lv={0}>
                <Dash $w={15} />
                <RootIcon />
              </TreeRow>
              <Scroll>
                <ScrollArrow>▲</ScrollArrow>
                <ScrollThumb />
                <ScrollArrow>▼</ScrollArrow>
              </Scroll>
            </Tree>
            <SideBtns>
              <WinBtn $mt={-1}>新   建</WinBtn>
              <WinBtn>修   改</WinBtn>
              <WinBtn>删除</WinBtn>
              <WinBtn $mt={13}>查   找</WinBtn>
              <WinBtn $mt={35}>导出公式</WinBtn>
              <WinBtn>导入公式</WinBtn>
              <WinBtn $mt={13}>临时导入</WinBtn>
              <WinBtn $auto>用户配置</WinBtn>
              <WinBtn $mt={11}>关   闭</WinBtn>
            </SideBtns>
          </MgrBody>
        </MgrPanel>
      </Manager>

      <PwdWin>
        <PwdTitle>密码保护--请输入密码!</PwdTitle>
        <PwdClient>
          <PwdCode>ABI</PwdCode>
          <PwdInput />
          <CheckLine>
            <CheckBox />
            设定有效时间
            <DateBox />
          </CheckLine>
          <HintLine>可设定公式到期日期.</HintLine>
          <PwdBtns>
            <PwdBtn>确定</PwdBtn>
            <PwdBtn>取消</PwdBtn>
          </PwdBtns>
        </PwdClient>
      </PwdWin>

      <ArrowSvg viewBox="0 0 18 132">
        <path d="M9 8V132" stroke="#5a0808" strokeWidth="2" />
        <path d="M9 1 14 12 9 9 4 12z" fill="#3a0404" />
      </ArrowSvg>
      <NoteBox>
        这里按回车键即可弹出密码
        <br />
        对话框或者打开密码文本。
      </NoteBox>
      <MarkCn>股海网</MarkCn>
      <MarkEn>www.Guhai.com.cn</MarkEn>

      <NotePad>
        <NoteTitle>
          <NoteIcon />
          mm.txt - 记事本
          <CaptionBtns>
            <Caption $w={31}>_</Caption>
            <Caption $w={25}>□</Caption>
            <Caption $w={48} $red>X</Caption>
          </CaptionBtns>
        </NoteTitle>
        <NoteClient>
          <NoteMenu>
            <NoteMenuItem $w={52}>文件(F)</NoteMenuItem>
            <NoteMenuItem $w={53}>编辑(E)</NoteMenuItem>
            <NoteMenuItem $w={55}>格式(O)</NoteMenuItem>
            <NoteMenuItem $w={55}>查看(V)</NoteMenuItem>
            <NoteMenuItem $w={50}>帮助(H)</NoteMenuItem>
          </NoteMenu>
          <NoteText>
            <NotePre>
              <Caret />[secretcode]{'\n'}密码=ASDFGH
            </NotePre>
            <NoteScroll>
              <span>▲</span>
              <span>▼</span>
            </NoteScroll>
          </NoteText>
        </NoteClient>
      </NotePad>
    </Page>
  );
}
